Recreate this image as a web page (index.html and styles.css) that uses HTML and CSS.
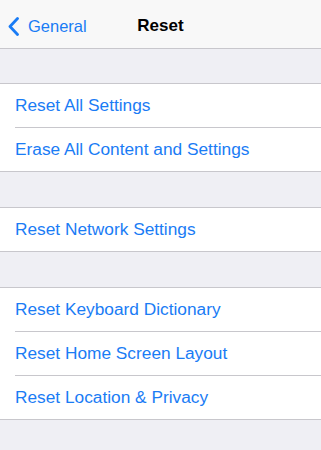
FILE: index.html
```html
<!DOCTYPE html>
<html>
<head>
<meta charset="utf-8">
<link rel="stylesheet" href="styles.css">
</head>
<body>
<header class="nav">
  <a class="back">
    <svg class="chev" width="13" height="19" viewBox="0 0 13 19"><path d="M10.5 1.5 L3 9.5 L10.5 17.5" fill="none" stroke="#1a7cf5" stroke-width="2.8" stroke-linecap="round" stroke-linejoin="round"/></svg>
    <span>General</span>
  </a>
  <h1 class="title">Reset</h1>
</header>
<main class="content">
  <section class="group">
    <div class="row">Reset All Settings</div>
    <div class="row">Erase All Content and Settings</div>
  </section>
  <section class="group">
    <div class="row">Reset Network Settings</div>
  </section>
  <section class="group">
    <div class="row">Reset Keyboard Dictionary</div>
    <div class="row">Reset Home Screen Layout</div>
    <div class="row">Reset Location &amp; Privacy</div>
  </section>
</main>
</body>
</html>
```
FILE: styles.css
```css
html, body {
  margin: 0;
  padding: 0;
  background: #efeff4;
  font-family: "Liberation Sans", Arial, sans-serif;
  height: 450px;
  overflow: hidden;
}
.nav {
  position: relative;
  background: #f8f8f8;
  border-bottom: 1px solid #c8c7cc;
  display: flex;
  align-items: center;
  box-sizing: border-box;
  height: 49px;
  padding-top: 4px;
}
.back {
  display: flex;
  align-items: center;
  gap: 8px;
  padding-left: 7px;
  color: #1a7cf5;
  font-size: 16.5px;
}
.chev { display: block; }
.title {
  position: absolute;
  left: 0;
  right: 0;
  top: 4px;
  bottom: 0;
  margin: 0;
  display: flex;
  align-items: center;
  justify-content: center;
  font-size: 17px;
  font-weight: bold;
  color: #000;
  pointer-events: none;
}
.content {
  padding-top: 34px;
  display: flex;
  flex-direction: column;
  gap: 35px;
}
.group {
  background: #fff;
  border-top: 1px solid #c8c7cc;
  border-bottom: 1px solid #c8c7cc;
}
.row {
  height: 43px;
  display: flex;
  align-items: center;
  padding-left: 15px;
  font-size: 17.3px;
  color: #1a7cf5;
}
.row + .row {
  border-top: 1px solid #c8c7cc;
  margin-left: 15px;
  padding-left: 0;
}
```
